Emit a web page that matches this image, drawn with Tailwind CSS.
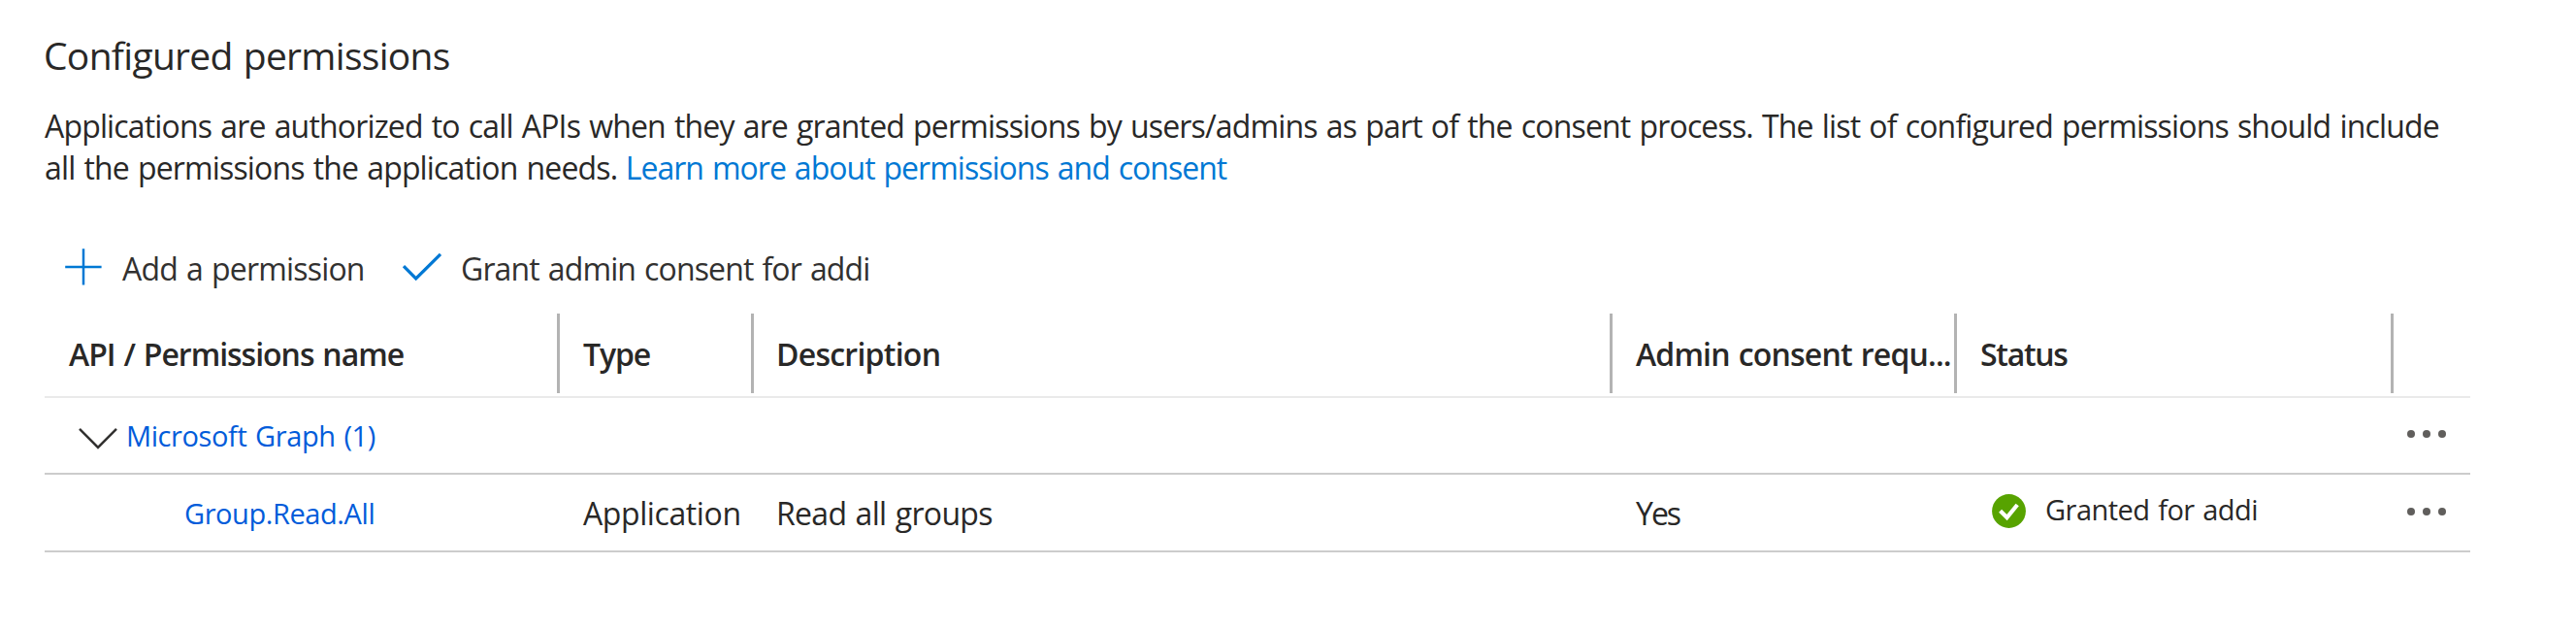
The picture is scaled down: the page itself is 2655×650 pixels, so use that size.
<!DOCTYPE html>
<html lang="en">
<head>
<meta charset="utf-8">
<title>Configured permissions</title>
<script src="https://cdn.jsdelivr.net/npm/@tailwindcss/browser@4"></script>
</head>
<body class="bg-white">
<main class="w-[2655px] h-[650px] overflow-hidden bg-white pl-[46px] pt-[30px] font-['Open_Sans',sans-serif] text-[32px] [word-spacing:1.6px] text-[#292827]">
  <h1 class="-ml-px h-[54px] text-[39px] leading-[54px] tracking-[-0.7px]">Configured permissions</h1>

  <p class="mt-6 leading-[43px] whitespace-nowrap"><span class="tracking-[-0.838px]">Applications are authorized to call APIs when they are granted permissions by users/admins as part of the consent process. The list of configured permissions should include</span><br><span class="tracking-[-0.85px]">all the permissions the application needs.</span><a class="ml-[8.5px] tracking-[-0.98px] text-[#0078d4]">Learn more about permissions and consent</a></p>

  <div class="mt-[60px] flex h-11 items-center leading-[44px] whitespace-nowrap text-[#323130]">
    <button class="flex h-11 items-center pl-5">
      <svg class="-mt-[2px] h-10 w-10" viewBox="0 0 40 40" fill="none" stroke="#0078d4" stroke-width="2.5"><path d="M1.2 20H38.6M20 1.2V38.6"/></svg>
      <span class="mt-[2px] ml-[20px] w-[249px] text-left tracking-[-0.82px] [word-spacing:1.6px]">Add a permission</span>
    </button>
    <button class="flex h-11 items-center pl-[39px]">
      <svg class="-mt-[2px] h-10 w-[42px]" viewBox="0 0 42 40" fill="none" stroke="#0078d4" stroke-width="3.2"><path d="M2 19.2L14.7 32L40 6.8"/></svg>
      <span class="mt-[2px] ml-[19px] tracking-[-0.88px] [word-spacing:1.6px]">Grant admin consent for addi</span>
    </button>
  </div>

  <section class="mt-[25px] w-[2500px] whitespace-nowrap">
    <div class="grid h-[87px] grid-cols-[531px_200px_885px_355px_450px_79px] border-b-2 border-[#eaeaea] font-semibold">
      <div class="flex h-[82px] border-r-3 border-[#b3b3b3] pt-5 pl-[25px] leading-[44px] tracking-[-1.02px]">API / Permissions name</div>
      <div class="flex h-[82px] border-r-3 border-[#b3b3b3] pt-5 pl-6 leading-[44px] tracking-[-1.1px]">Type</div>
      <div class="flex h-[82px] border-r-3 border-[#b3b3b3] pt-5 pl-[23px] leading-[44px] tracking-[-0.75px]">Description</div>
      <div class="flex h-[82px] border-r-3 border-[#b3b3b3] pt-5 pl-6 leading-[44px] tracking-[-0.83px]">Admin consent requ...</div>
      <div class="flex h-[82px] border-r-3 border-[#b3b3b3] pt-5 pl-6 leading-[44px] tracking-[-1.3px]">Status</div>
      <div></div>
    </div>
    <div class="flex h-[79px] items-center justify-between border-b-2 border-[#ccc]">
      <div class="flex items-center pl-[35px]">
        <svg class="mt-[7px] h-6 w-10" viewBox="0 0 40 24" fill="none" stroke="#323130" stroke-width="2.5"><path d="M1 1.8L20 21L39 1.8"/></svg>
        <a class="ml-[9px] pt-px text-[29px] leading-[44px] tracking-[-0.4px] text-[#015cda]">Microsoft Graph (1)</a>
      </div>
      <svg class="mr-[25px] -mt-[3px] h-2 w-10" viewBox="0 0 40 8" fill="#605e5c"><circle cx="4" cy="4" r="4"/><circle cx="20" cy="4" r="4"/><circle cx="36" cy="4" r="4"/></svg>
    </div>
    <div class="grid h-[80px] grid-cols-[531px_200px_885px_355px_450px_79px] items-center border-b-2 border-[#ccc] leading-[44px]">
      <a class="pt-[2px] pl-[144px] text-[29px] tracking-[-0.42px] text-[#015cda]">Group.Read.All</a>
      <span class="pt-[2px] pl-6 tracking-[-0.4px]">Application</span>
      <span class="pt-[2px] pl-[23px] tracking-[-0.68px]">Read all groups</span>
      <span class="pt-[2px] pl-6 tracking-[-2px]">Yes</span>
      <div class="-mt-[3px] flex items-center pl-[36px]">
        <svg class="h-[35px] w-[35px]" viewBox="0 0 35 35"><circle cx="17.5" cy="17.5" r="17.4" fill="#57a300"/><path d="M8.6 17.2L15.5 24.1L26.2 11" fill="none" stroke="#fff" stroke-width="4.2"/></svg>
        <span class="-mt-[3px] ml-[20px] text-[29px] tracking-[-0.52px]">Granted for addi</span>
      </div>
      <svg class="ml-[14px] -mt-[2px] h-2 w-10" viewBox="0 0 40 8" fill="#605e5c"><circle cx="4" cy="4" r="4"/><circle cx="20" cy="4" r="4"/><circle cx="36" cy="4" r="4"/></svg>
    </div>
  </section>
</main>
</body>
</html>
